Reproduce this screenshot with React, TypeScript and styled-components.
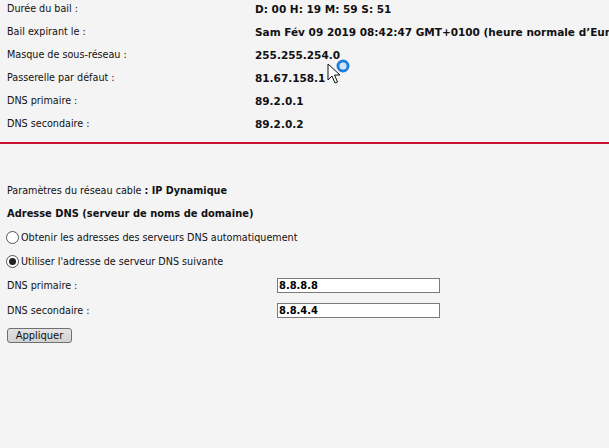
import React from "react";
import styled, { createGlobalStyle } from "styled-components";

const GlobalStyle = createGlobalStyle`
  html, body {
    margin: 0;
    padding: 0;
    background: #f4f4f4;
    overflow: hidden;
  }
  body {
    font-family: "DejaVu Sans Condensed", "DejaVu Sans", sans-serif;
    font-size: 10.7px;
    color: #111;
  }
`;

const Page = styled.div`
  position: relative;
  width: 609px;
  height: 448px;
  overflow: hidden;
`;

const InfoTable = styled.div`
  display: flex;
  flex-direction: column;
  margin-top: -3px;
  padding-left: 7px;
`;

const InfoRow = styled.div`
  display: grid;
  grid-template-columns: 248px 1fr;
  height: 23px;
  align-items: center;
  white-space: nowrap;
  overflow: hidden;
`;

const Value = styled.span<{ $wide?: boolean }>`
  font-weight: bold;
  font-family: ${(p) =>
    p.$wide ? '"DejaVu Sans", sans-serif' : '"DejaVu Sans Condensed", "DejaVu Sans", sans-serif'};
  font-size: ${(p) => (p.$wide ? "10.5px" : "inherit")};
  overflow: hidden;
`;

const Divider = styled.div`
  height: 2px;
  background: #c8102e;
  margin-top: 7px;
`;

const Section = styled.div`
  display: flex;
  flex-direction: column;
  padding: 35px 0 0 7px;
`;

const Line = styled.div`
  height: 23px;
  display: flex;
  align-items: center;
  white-space: nowrap;
`;

const Heading = styled(Line)`
  font-weight: bold;
  font-size: 11px;
`;

const RadioRow = styled.label`
  height: 24px;
  display: flex;
  align-items: center;
  margin-left: -1px;
  white-space: nowrap;
`;

const Radio = styled.span<{ $checked?: boolean }>`
  width: 11px;
  height: 11px;
  border: 1px solid #555;
  border-radius: 50%;
  background: #fff;
  margin-right: 2px;
  display: flex;
  align-items: center;
  justify-content: center;
  &::after {
    content: "";
    display: ${(p) => (p.$checked ? "block" : "none")};
    width: 7px;
    height: 7px;
    border-radius: 50%;
    background: #222;
  }
`;

const FieldRow = styled.div`
  display: grid;
  grid-template-columns: 270px 163px;
  height: 25px;
  align-items: center;
`;

const Input = styled.input`
  box-sizing: border-box;
  width: 163px;
  height: 15px;
  border: 1px solid #7a7a7a;
  background: #fff;
  padding: 0 1px;
  font-family: "DejaVu Sans Condensed", "DejaVu Sans", sans-serif;
  font-size: 11px;
  font-weight: bold;
  color: #000;
  outline: none;
`;

const Button = styled.button`
  width: 65px;
  height: 15px;
  margin-top: 5px;
  padding: 0;
  border: 1px solid #6f6f6f;
  border-radius: 3px;
  background: linear-gradient(#e3e3e3, #d2d2d2);
  font-family: "DejaVu Sans Condensed", "DejaVu Sans", sans-serif;
  font-size: 11px;
  color: #111;
  line-height: 13px;
`;

const Pointer = styled.svg`
  position: absolute;
  left: 326px;
  top: 59px;
`;

const info: [string, string][] = [
  ["Durée du bail :", "D: 00 H: 19 M: 59 S: 51"],
  ["Bail expirant le :", "Sam Fév 09 2019 08:42:47 GMT+0100 (heure normale d’Euro"],
  ["Masque de sous-réseau :", "255.255.254.0"],
  ["Passerelle par défaut :", "81.67.158.1"],
  ["DNS primaire :", "89.2.0.1"],
  ["DNS secondaire :", "89.2.0.2"],
];

const App = () => {
  return (
    <Page>
      <GlobalStyle />
      <InfoTable>
        {info.map(([label, value]) => (
          <InfoRow key={label}>
            <span>{label}</span>
            <Value $wide>{value}</Value>
          </InfoRow>
        ))}
      </InfoTable>
      <Divider />
      <Section>
        <Line>
          Paramètres du réseau cable&nbsp;<Value>: IP Dynamique</Value>
        </Line>
        <Heading>Adresse DNS (serveur de noms de domaine)</Heading>
        <RadioRow>
          <Radio />
          Obtenir les adresses des serveurs DNS automatiquement
        </RadioRow>
        <RadioRow>
          <Radio $checked />
          Utiliser l'adresse de serveur DNS suivante
        </RadioRow>
        <FieldRow>
          <span>DNS primaire :</span>
          <Input defaultValue="8.8.8.8" />
        </FieldRow>
        <FieldRow>
          <span>DNS secondaire :</span>
          <Input defaultValue="8.8.4.4" />
        </FieldRow>
        <div>
          <Button>Appliquer</Button>
        </div>
      </Section>
      {/* mouse pointer with busy ring */}
      <Pointer width="26" height="30" viewBox="0 0 26 30">
        <path
          d="M2 5 L2 21 L6 17 L9 24 L11.5 23 L8.5 16 L14 16 Z"
          fill="#fff"
          stroke="#111"
          strokeWidth="1"
          strokeLinejoin="round"
        />
        <circle cx="17" cy="7" r="5" fill="none" stroke="#1f7fe0" strokeWidth="3" />
        <circle cx="17" cy="7" r="3" fill="#cfe4fb" />
      </Pointer>
    </Page>
  );
};

export default App;
